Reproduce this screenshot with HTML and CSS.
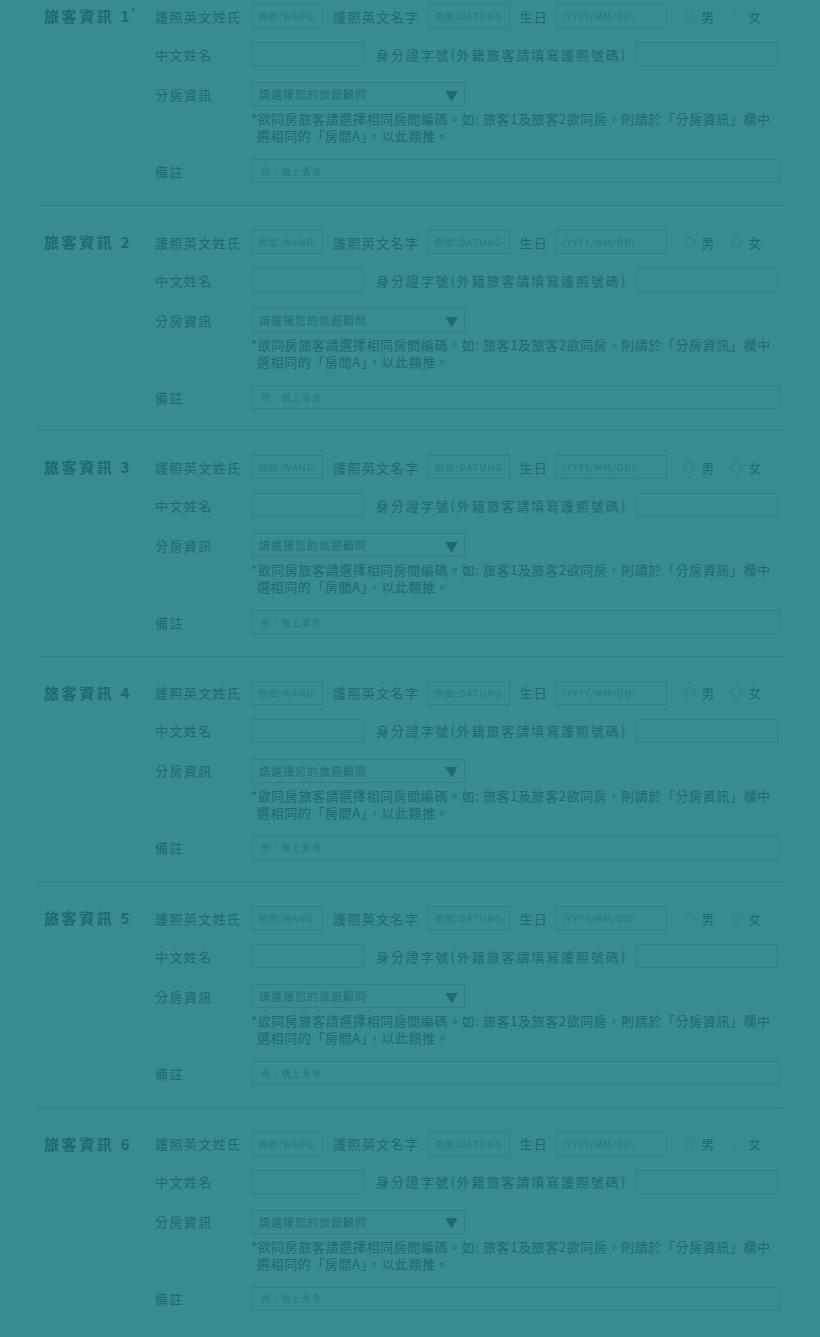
FILE: index.html
```html
<!DOCTYPE html>
<html lang="zh-Hant">
<head>
<meta charset="utf-8">
<title>旅客資訊</title>
<link rel="stylesheet" href="styles.css">
</head>
<body>
<main class="page">
  <section class="traveler first">
    <h2 class="title">旅客資訊 1<span class="req">*</span></h2>
    <div class="fields">
      <div class="row">
        <label class="label">護照英文姓氏</label>
        <input class="box w-last" placeholder="例如:WANG">
        <label class="label inline">護照英文名字</label>
        <input class="box w-first" placeholder="例如:DATUNG">
        <label class="label inline short">生日</label>
        <input class="box w-birth" placeholder="(YYYY/MM/DD)">
        <span class="radios"><span class="radio"><i></i>男</span><span class="radio"><i></i>女</span></span>
      </div>
      <div class="row">
        <label class="label">中文姓名</label>
        <input class="box w-cname">
        <label class="label inline id">身分證字號(外籍旅客請填寫護照號碼)</label>
        <input class="box w-id">
      </div>
      <div class="row row-select">
        <label class="label">分房資訊</label>
        <div class="select"><span>請選擇您的旅遊顧問</span><b>▼</b></div>
      </div>
      <p class="note">*欲同房旅客請選擇相同房間編碼。如: 旅客1及旅客2欲同房，則請於「分房資訊」欄中選相同的「房間A」，以此類推。</p>
      <div class="row row-remark">
        <label class="label">備註</label>
        <input class="box remark" placeholder="例：機上素食">
      </div>
    </div>
  </section>

  <section class="traveler">
    <h2 class="title">旅客資訊 2</h2>
    <div class="fields">
      <div class="row">
        <label class="label">護照英文姓氏</label>
        <input class="box w-last" placeholder="例如:WANG">
        <label class="label inline">護照英文名字</label>
        <input class="box w-first" placeholder="例如:DATUNG">
        <label class="label inline short">生日</label>
        <input class="box w-birth" placeholder="(YYYY/MM/DD)">
        <span class="radios"><span class="radio"><i></i>男</span><span class="radio"><i></i>女</span></span>
      </div>
      <div class="row">
        <label class="label">中文姓名</label>
        <input class="box w-cname">
        <label class="label inline id">身分證字號(外籍旅客請填寫護照號碼)</label>
        <input class="box w-id">
      </div>
      <div class="row row-select">
        <label class="label">分房資訊</label>
        <div class="select"><span>請選擇您的旅遊顧問</span><b>▼</b></div>
      </div>
      <p class="note">*欲同房旅客請選擇相同房間編碼。如: 旅客1及旅客2欲同房，則請於「分房資訊」欄中選相同的「房間A」，以此類推。</p>
      <div class="row row-remark">
        <label class="label">備註</label>
        <input class="box remark" placeholder="例：機上素食">
      </div>
    </div>
  </section>

  <section class="traveler">
    <h2 class="title">旅客資訊 3</h2>
    <div class="fields">
      <div class="row">
        <label class="label">護照英文姓氏</label>
        <input class="box w-last" placeholder="例如:WANG">
        <label class="label inline">護照英文名字</label>
        <input class="box w-first" placeholder="例如:DATUNG">
        <label class="label inline short">生日</label>
        <input class="box w-birth" placeholder="(YYYY/MM/DD)">
        <span class="radios"><span class="radio"><i></i>男</span><span class="radio"><i></i>女</span></span>
      </div>
      <div class="row">
        <label class="label">中文姓名</label>
        <input class="box w-cname">
        <label class="label inline id">身分證字號(外籍旅客請填寫護照號碼)</label>
        <input class="box w-id">
      </div>
      <div class="row row-select">
        <label class="label">分房資訊</label>
        <div class="select"><span>請選擇您的旅遊顧問</span><b>▼</b></div>
      </div>
      <p class="note">*欲同房旅客請選擇相同房間編碼。如: 旅客1及旅客2欲同房，則請於「分房資訊」欄中選相同的「房間A」，以此類推。</p>
      <div class="row row-remark">
        <label class="label">備註</label>
        <input class="box remark" placeholder="例：機上素食">
      </div>
    </div>
  </section>

  <section class="traveler">
    <h2 class="title">旅客資訊 4</h2>
    <div class="fields">
      <div class="row">
        <label class="label">護照英文姓氏</label>
        <input class="box w-last" placeholder="例如:WANG">
        <label class="label inline">護照英文名字</label>
        <input class="box w-first" placeholder="例如:DATUNG">
        <label class="label inline short">生日</label>
        <input class="box w-birth" placeholder="(YYYY/MM/DD)">
        <span class="radios"><span class="radio"><i></i>男</span><span class="radio"><i></i>女</span></span>
      </div>
      <div class="row">
        <label class="label">中文姓名</label>
        <input class="box w-cname">
        <label class="label inline id">身分證字號(外籍旅客請填寫護照號碼)</label>
        <input class="box w-id">
      </div>
      <div class="row row-select">
        <label class="label">分房資訊</label>
        <div class="select"><span>請選擇您的旅遊顧問</span><b>▼</b></div>
      </div>
      <p class="note">*欲同房旅客請選擇相同房間編碼。如: 旅客1及旅客2欲同房，則請於「分房資訊」欄中選相同的「房間A」，以此類推。</p>
      <div class="row row-remark">
        <label class="label">備註</label>
        <input class="box remark" placeholder="例：機上素食">
      </div>
    </div>
  </section>

  <section class="traveler">
    <h2 class="title">旅客資訊 5</h2>
    <div class="fields">
      <div class="row">
        <label class="label">護照英文姓氏</label>
        <input class="box w-last" placeholder="例如:WANG">
        <label class="label inline">護照英文名字</label>
        <input class="box w-first" placeholder="例如:DATUNG">
        <label class="label inline short">生日</label>
        <input class="box w-birth" placeholder="(YYYY/MM/DD)">
        <span class="radios"><span class="radio"><i></i>男</span><span class="radio"><i></i>女</span></span>
      </div>
      <div class="row">
        <label class="label">中文姓名</label>
        <input class="box w-cname">
        <label class="label inline id">身分證字號(外籍旅客請填寫護照號碼)</label>
        <input class="box w-id">
      </div>
      <div class="row row-select">
        <label class="label">分房資訊</label>
        <div class="select"><span>請選擇您的旅遊顧問</span><b>▼</b></div>
      </div>
      <p class="note">*欲同房旅客請選擇相同房間編碼。如: 旅客1及旅客2欲同房，則請於「分房資訊」欄中選相同的「房間A」，以此類推。</p>
      <div class="row row-remark">
        <label class="label">備註</label>
        <input class="box remark" placeholder="例：機上素食">
      </div>
    </div>
  </section>

  <section class="traveler">
    <h2 class="title">旅客資訊 6</h2>
    <div class="fields">
      <div class="row">
        <label class="label">護照英文姓氏</label>
        <input class="box w-last" placeholder="例如:WANG">
        <label class="label inline">護照英文名字</label>
        <input class="box w-first" placeholder="例如:DATUNG">
        <label class="label inline short">生日</label>
        <input class="box w-birth" placeholder="(YYYY/MM/DD)">
        <span class="radios"><span class="radio"><i></i>男</span><span class="radio"><i></i>女</span></span>
      </div>
      <div class="row">
        <label class="label">中文姓名</label>
        <input class="box w-cname">
        <label class="label inline id">身分證字號(外籍旅客請填寫護照號碼)</label>
        <input class="box w-id">
      </div>
      <div class="row row-select">
        <label class="label">分房資訊</label>
        <div class="select"><span>請選擇您的旅遊顧問</span><b>▼</b></div>
      </div>
      <p class="note">*欲同房旅客請選擇相同房間編碼。如: 旅客1及旅客2欲同房，則請於「分房資訊」欄中選相同的「房間A」，以此類推。</p>
      <div class="row row-remark">
        <label class="label">備註</label>
        <input class="box remark" placeholder="例：機上素食">
      </div>
    </div>
  </section>
</main>
</body>
</html>
```

FILE: styles.css
```css
html, body {
  margin: 0;
  padding: 0;
  background: #388b91;
  height: 1337px;
  overflow: hidden;
}

body {
  font-family: "Noto Sans CJK TC", "Noto Sans", sans-serif;
  color: #1e6a70;
}

.page {
  width: 747px;
  margin-left: 36px;
}

.traveler {
  display: flex;
  border-top: 1px solid #2f8086;
  padding: 24px 0 21.4px 8px;
}

.traveler.first {
  border-top: none;
  padding-top: 4px;
  padding-bottom: 22px;
}

.title {
  margin: 0;
  width: 111px;
  flex: none;
  font-size: 15px;
  font-weight: 700;
  letter-spacing: 2.6px;
  line-height: 24px;
  height: 24px;
  white-space: nowrap;
}

.req {
  font-size: 10px;
  vertical-align: top;
  line-height: 16px;
  letter-spacing: 0;
  margin-left: -1px;
  font-weight: 400;
}

.fields {
  display: flex;
  flex-direction: column;
  width: 628px;
}

.row {
  display: flex;
  align-items: center;
  height: 24px;
}

.row + .row {
  margin-top: 14px;
}

.row.row-select {
  margin-top: 16px;
}

.label {
  width: 96px;
  flex: none;
  font-size: 13px;
  letter-spacing: 1.4px;
  white-space: nowrap;
}

.label.inline {
  width: auto;
  margin: 0 8px 0 10px;
}

.label.inline.short {
  margin: 0 7px 0 9px;
}

.label.id {
  margin: 0 9px 0 12px;
  letter-spacing: 1.9px;
}

.box {
  box-sizing: border-box;
  height: 24px;
  border: 1px solid #2f8086;
  background: transparent;
  padding: 0 6px;
  font-family: "Noto Sans CJK TC", "Noto Sans", sans-serif;
  font-size: 9.5px;
  letter-spacing: 1px;
  color: #1e6a70;
  outline: none;
  flex: none;
}

.box::placeholder {
  color: #29787e;
}

.w-last { width: 72px; }
.w-first { width: 83px; }
.w-birth { width: 112px; }
.w-cname { width: 113px; }
.w-id { width: 142px; }
.remark { width: 529px; padding-left: 9px; letter-spacing: 1.2px; font-size: 9px; }

.radios {
  display: flex;
  align-items: center;
  margin-left: 17px;
  font-size: 13px;
}

.radio {
  display: flex;
  align-items: center;
  margin-right: 17px;
}

.radio i {
  display: block;
  width: 11px;
  height: 11px;
  box-sizing: border-box;
  border: 1px solid #2f8086;
  border-radius: 50%;
  margin-right: 6px;
}

.select {
  box-sizing: border-box;
  width: 214px;
  height: 24px;
  border: 1px solid #2f8086;
  display: flex;
  align-items: center;
  justify-content: space-between;
  padding: 0 6px 0 7px;
}

.select span {
  font-size: 11px;
  letter-spacing: 1px;
  color: #246f75;
}

.select b {
  font-size: 13px;
  font-weight: 400;
  color: #1e6a70;
  line-height: 1;
}

.note {
  margin: 4px 0 0 96px;
  padding-left: 6px;
  text-indent: -6px;
  font-size: 13px;
  line-height: 17px;
  letter-spacing: 0.6px;
  width: 522px;
}

.row.row-remark {
  margin-top: 15px;
}
```
